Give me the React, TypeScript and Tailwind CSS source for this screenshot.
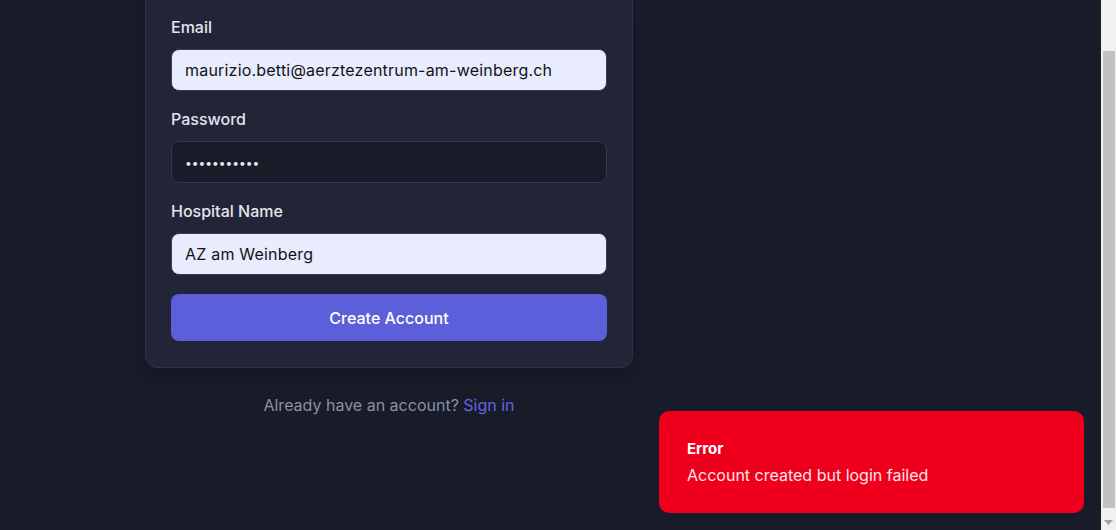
import React, { useEffect, useRef } from "react";

const fields = [
  { label: "Email", type: "email", value: "maurizio.betti@aerztezentrum-am-weinberg.ch", filled: true },
  { label: "Password", type: "password", value: "secret12345", filled: false },
  { label: "Hospital Name", type: "text", value: "AZ am Weinberg", filled: true },
];

const App: React.FC = () => {
  const scroller = useRef<HTMLDivElement>(null);

  // the screenshot shows the page scrolled to the bottom
  useEffect(() => {
    if (scroller.current) scroller.current.scrollTop = scroller.current.scrollHeight;
  }, []);

  return (
    <div className="flex h-screen w-full bg-[#181b28] font-['Inter',sans-serif]">
      <div className="relative h-full flex-1">
        <div ref={scroller} className="h-full overflow-hidden">
          <div className="pt-8 pb-[113px] pl-[145px]">
            <div className="w-[488px]">
              {/* Card */}
              <div className="rounded-xl border border-[#2f3347] bg-[#222537] px-[25px] pt-[25px] pb-[26px] shadow-lg">
                <form className="flex flex-col" onSubmit={(e) => e.preventDefault()}>
                  {fields.map((f, i) => (
                    <div key={f.label} className={i > 0 ? "mt-4" : ""}>
                      <label className="mb-[10px] block text-[16px] leading-6 font-medium text-[#e3e5ee]">
                        {f.label}
                      </label>
                      <input
                        type={f.type}
                        value={f.value}
                        readOnly
                        className={
                          f.filled
                            ? "block h-[42px] w-full rounded-lg border border-[#3a3e52] bg-[#e8ecfd] px-[13px] text-[16px] tracking-[0.2px] text-[#111318] outline-none"
                            : "block h-[42px] w-full rounded-lg border border-[#33374b] bg-[#181b28] px-[13px] text-[12px] text-[#e6e8f0] outline-none"
                        }
                      />
                    </div>
                  ))}
                  <button
                    type="submit"
                    className="mt-[19px] h-[47px] w-full rounded-lg bg-[#5b5fd9] text-[16px] font-medium text-white"
                  >
                    Create Account
                  </button>
                </form>
              </div>

              <p className="mt-[25px] text-center text-[16px] leading-6 text-[#8b8fa4]">
                Already have an account? <a className="text-[#6064e4]">Sign in</a>
              </p>
            </div>
          </div>
        </div>

        {/* Toast */}
        <div className="absolute right-[17px] bottom-[17px] w-[425px] rounded-[10px] bg-[#ee001d] px-7 py-7 text-white">
          <p className="text-[15px] leading-5 font-bold">Error</p>
          <p className="mt-[6px] text-[16px] leading-5 text-[#fde4e7]">Account created but login failed</p>
        </div>
      </div>

      {/* Scrollbar */}
      <div className="flex h-full w-[15px] flex-col items-center bg-[#f1f1f1] pt-[51px]">
        <div className="h-[457px] w-[12px] bg-[#c1c1c1]" />
        <svg className="mt-[12px]" width="9" height="5" viewBox="0 0 9 5">
          <path d="M0 0h9L4.5 5z" fill="#a3a3a3" />
        </svg>
      </div>
    </div>
  );
};

export default App;
